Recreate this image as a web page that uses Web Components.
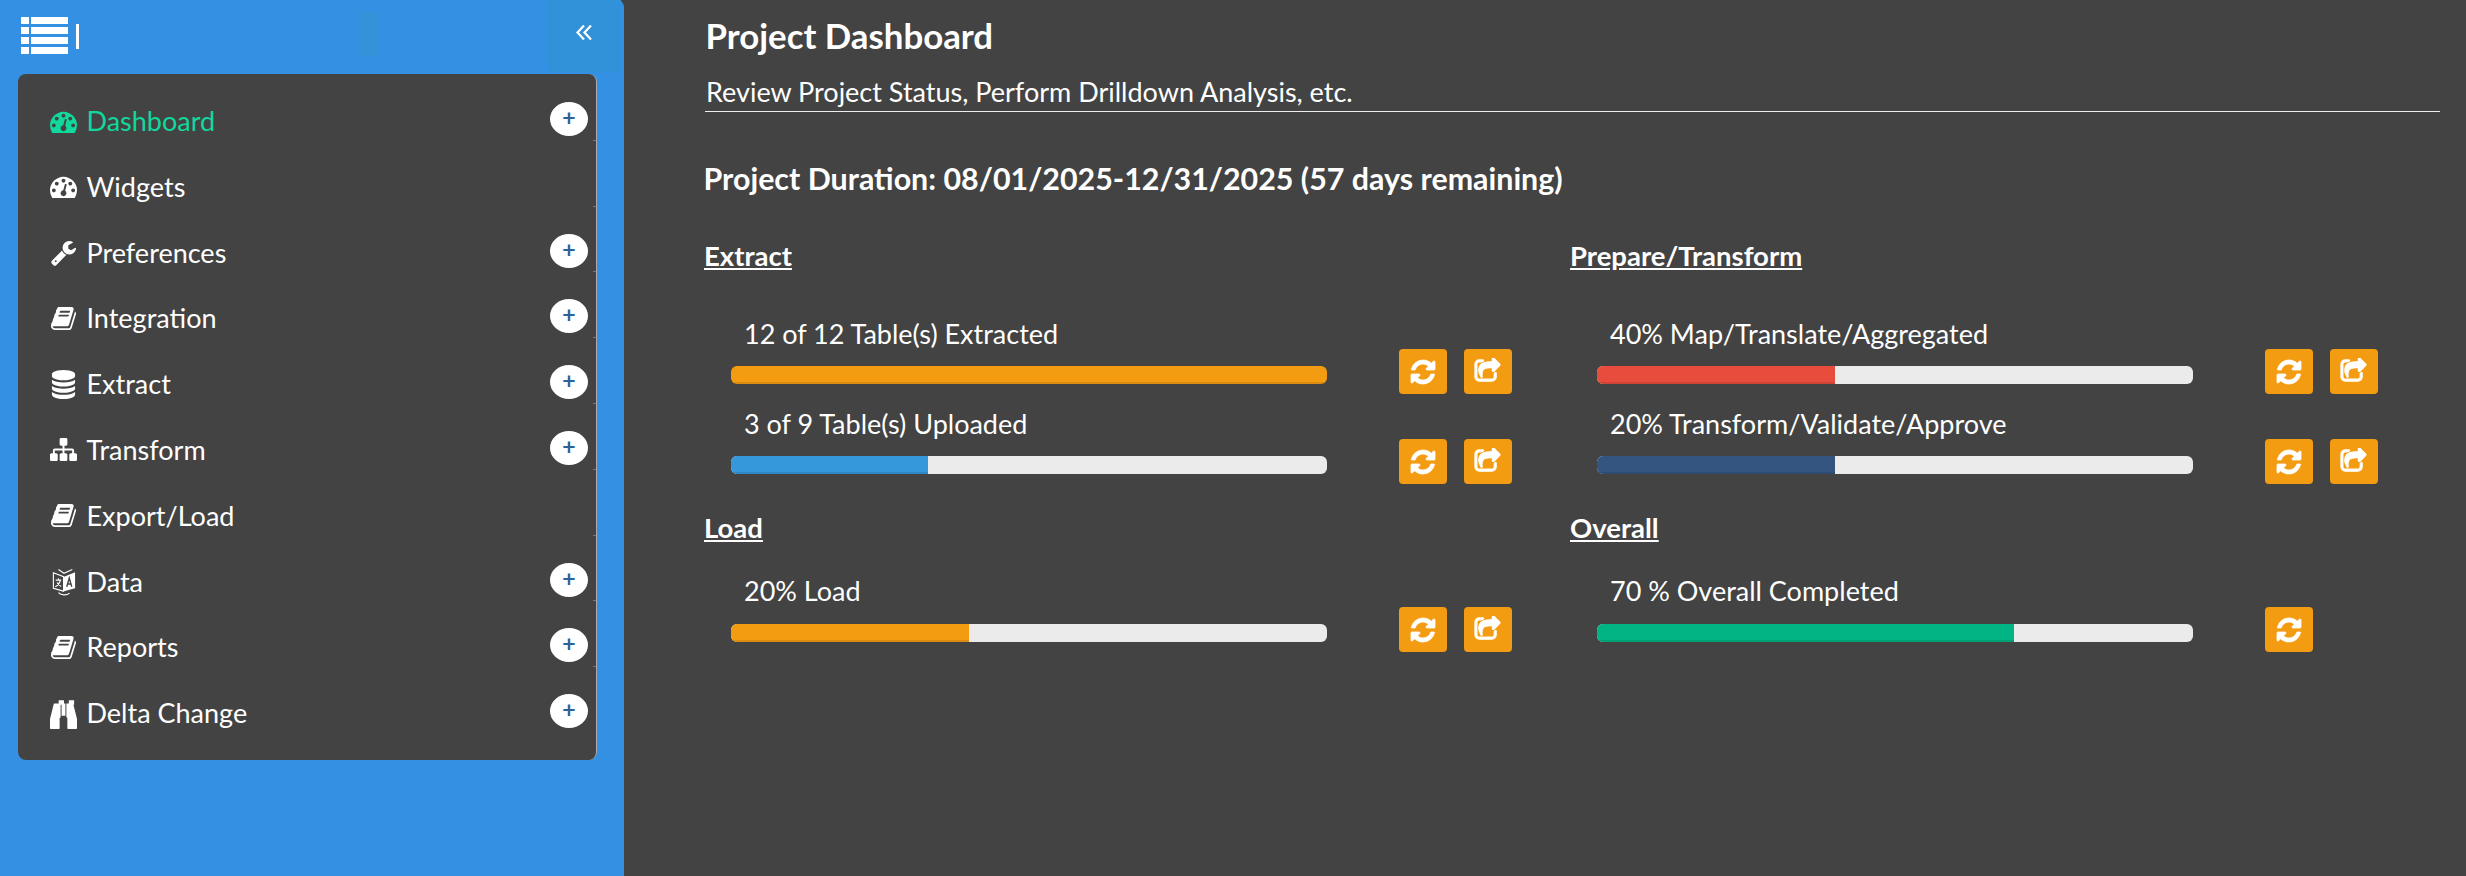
<!DOCTYPE html>
<html>
<head>
<meta charset="utf-8">
<title>Project Dashboard</title>
<style>
  html, body { margin: 0; height: 100%; }
  body { background: #434343; color: #fff; font-family: Lato, "Liberation Sans", sans-serif; overflow: hidden; }
</style>
</head>
<body>
<app-shell>
  <app-sidebar slot="sidebar">
    <nav-item icon="tachometer" expandable active>Dashboard</nav-item>
    <nav-item icon="tachometer">Widgets</nav-item>
    <nav-item icon="wrench" expandable>Preferences</nav-item>
    <nav-item icon="book" expandable>Integration</nav-item>
    <nav-item icon="database" expandable>Extract</nav-item>
    <nav-item icon="sitemap" expandable>Transform</nav-item>
    <nav-item icon="book">Export/Load</nav-item>
    <nav-item icon="language" expandable>Data</nav-item>
    <nav-item icon="book" expandable>Reports</nav-item>
    <nav-item icon="binoculars" expandable>Delta Change</nav-item>
  </app-sidebar>

  <page-header heading="Project Dashboard" subheading="Review Project Status, Perform Drilldown Analysis, etc."></page-header>
  <project-duration>Project Duration: 08/01/2025-12/31/2025 (57 days remaining)</project-duration>

  <dash-grid>
    <dash-section heading="Extract">
      <progress-row label="12 of 12 Table(s) Extracted" value="100" color="#f39c12"></progress-row>
      <progress-row label="3 of 9 Table(s) Uploaded" value="33" color="#3498db"></progress-row>
    </dash-section>
    <dash-section heading="Prepare/Transform">
      <progress-row label="40% Map/Translate/Aggregated" value="40" color="#e74c3c"></progress-row>
      <progress-row label="20% Transform/Validate/Approve" value="40" color="#34557f"></progress-row>
    </dash-section>
    <dash-section heading="Load" compact>
      <progress-row label="20% Load" value="40" color="#f39c12"></progress-row>
    </dash-section>
    <dash-section heading="Overall" compact>
      <progress-row label="70 % Overall Completed" value="70" color="#00b583" no-share></progress-row>
    </dash-section>
  </dash-grid>
</app-shell>

<script>
/********************************* AppIcon ******************************************/
const ICON_PATHS = {
  tachometer: 'M384 1152q0-53-37.5-90.5t-90.5-37.5-90.5 37.5-37.5 90.5 37.5 90.5 90.5 37.5 90.5-37.5 37.5-90.5zm192-448q0-53-37.5-90.5t-90.5-37.5-90.5 37.5-37.5 90.5 37.5 90.5 90.5 37.5 90.5-37.5 37.5-90.5zm428 481l101-382q6-26-7.5-48.5t-38.5-29.5-48 6.5-30 39.5l-101 382q-60 5-107 43.5t-63 98.5q-20 77 20 146t117 89 146-20 89-117q16-60-6-117t-72-91zm660-33q0-53-37.5-90.5t-90.5-37.5-90.5 37.5-37.5 90.5 37.5 90.5 90.5 37.5 90.5-37.5 37.5-90.5zm-640-640q0-53-37.5-90.5t-90.5-37.5-90.5 37.5-37.5 90.5 37.5 90.5 90.5 37.5 90.5-37.5 37.5-90.5zm448 192q0-53-37.5-90.5t-90.5-37.5-90.5 37.5-37.5 90.5 37.5 90.5 90.5 37.5 90.5-37.5 37.5-90.5zm320 448q0 261-141 483-19 29-54 29h-1402q-35 0-54-29-141-221-141-483 0-182 71-348t191-286 286-191 348-71 348 71 286 191 191 286 71 348z',
  wrench: 'M448 1472q0-26-19-45t-45-19-45 19-19 45 19 45 45 19 45-19 19-45zm644-420l-682 682q-37 37-90 37-52 0-91-37l-106-108q-38-36-38-90 0-53 38-91l681-681q39 98 114.5 173.5t173.5 114.5zm634-435q0 39-23 106-47 134-164.5 217.5t-258.5 83.5q-185 0-316.5-131.5t-131.5-316.5 131.5-316.5 316.5-131.5q58 0 121.5 16.5t107.5 46.5q16 11 16 28t-16 28l-293 169v224l193 107q5-3 79-48.5t135.5-81 70.5-35.5q15 0 23.5 10t8.5 25z',
  book: 'M1703 478q40 57 18 129l-275 906q-19 64-76.5 107.5t-122.5 43.5h-923q-77 0-148.5-53.5t-99.5-131.5q-24-67-2-127 0-4 3-27t4-37q1-8-3-21.5t-3-19.5q2-11 8-21t16.5-23.5 16.5-23.5q23-38 45-91.5t30-91.5q3-10 .5-30t-.5-28q3-11 17-28t17-23q21-36 42-92t25-90q1-9-2.5-32t.5-28q4-13 22-30.5t22-22.5q19-26 42.5-84.5t27.5-96.5q1-8-3-25.5t-2-26.5q2-8 9-18t18-23 17-21q8-12 16.5-30.5t15-35 16-36 19.5-32 26.5-23.5 36-11.5 47.5 5.5l-1 3q38-9 51-9h761q74 0 114 56t18 130l-274 906q-36 119-71.5 153.5t-128.5 34.5h-869q-27 0-38 15-11 16-1 43 24 70 144 70h923q29 0 56-15.5t35-41.5l300-987q7-22 5-57 38 15 59 43zm-1064 2q-4 13 2 22.5t20 9.5h608q13 0 25.5-9.5t16.5-22.5l21-64q4-13-2-22.5t-20-9.5h-608q-13 0-25.5 9.5t-16.5 22.5zm-83 256q-4 13 2 22.5t20 9.5h608q13 0 25.5-9.5t16.5-22.5l21-64q4-13-2-22.5t-20-9.5h-608q-13 0-25.5 9.5t-16.5 22.5z',
  database: 'M896 768q237 0 443-43t325-127v170q0 69-103 128t-280 93.5-385 34.5-385-34.5-280-93.5-103-128v-170q119 84 325 127t443 43zm0 768q237 0 443-43t325-127v170q0 69-103 128t-280 93.5-385 34.5-385-34.5-280-93.5-103-128v-170q119 84 325 127t443 43zm0-384q237 0 443-43t325-127v170q0 69-103 128t-280 93.5-385 34.5-385-34.5-280-93.5-103-128v-170q119 84 325 127t443 43zm0-1152q208 0 385 34.5t280 93.5 103 128v128q0 69-103 128t-280 93.5-385 34.5-385-34.5-280-93.5-103-128v-128q0-69 103-128t280-93.5 385-34.5z',
  sitemap: 'M1792 1248v320q0 40-28 68t-68 28h-320q-40 0-68-28t-28-68v-320q0-40 28-68t68-28h96v-192h-512v192h96q40 0 68 28t28 68v320q0 40-28 68t-68 28h-320q-40 0-68-28t-28-68v-320q0-40 28-68t68-28h96v-192h-512v192h96q40 0 68 28t28 68v320q0 40-28 68t-68 28h-320q-40 0-68-28t-28-68v-320q0-40 28-68t68-28h96v-192q0-52 38-90t90-38h512v-192h-96q-40 0-68-28t-28-68v-320q0-40 28-68t68-28h320q40 0 68 28t28 68v320q0 40-28 68t-68 28h-96v192h512q52 0 90 38t38 90v192h96q40 0 68 28t28 68z',
  binoculars: 'M704 320v768q0 26-19 45t-45 19v576q0 26-19 45t-45 19h-512q-26 0-45-19t-19-45v-512l249-873q7-23 31-23h424zm320 0v704h-256v-704h256zm768 896v512q0 26-19 45t-45 19h-512q-26 0-45-19t-19-45v-576q-26 0-45-19t-19-45v-768h424q24 0 31 23zm-864-1056v224h-352v-224q0-14 9-23t23-9h288q14 0 23 9t9 23zm672 0v224h-352v-224q0-14 9-23t23-9h288q14 0 23 9t9 23z',
  refresh: 'M1639 1056q0 5-1 7-64 268-268 434.5t-478 166.5q-146 0-282.5-55t-243.5-157l-129 129q-19 19-45 19t-45-19-19-45v-448q0-26 19-45t45-19h448q26 0 45 19t19 45-19 45l-137 137q71 66 161 102t187 36q134 0 250-65t186-179q11-17 53-117 8-23 30-23h192q13 0 22.5 9.5t9.5 22.5zm25-800v448q0 26-19 45t-45 19h-448q-26 0-45-19t-19-45 19-45l138-138q-148-137-349-137-134 0-250 65t-186 179q-11 17-53 117-8 23-30 23h-199q-13 0-22.5-9.5t-9.5-22.5v-7q65-268 270-434.5t480-166.5q146 0 284 55.5t245 156.5l130-129q19-19 45-19t45 19 19 45z',
  share: 'M1472 989v259q0 119-84.5 203.5t-203.5 84.5h-832q-119 0-203.5-84.5t-84.5-203.5v-832q0-119 84.5-203.5t203.5-84.5h255q13 0 22.5 9.5t9.5 22.5q0 27-26 32-77 26-133 60-10 4-16 4h-112q-66 0-113 47t-47 113v832q0 66 47 113t113 47h832q66 0 113-47t47-113v-214q0-19 18-29 28-13 54-37 16-16 35-8 21 9 21 29zm237-496l-384 384q-18 19-45 19-12 0-25-5-39-17-39-59v-192h-160q-323 0-438 131-119 137-74 473 3 23-20 34-8 2-12 2-16 0-26-13-10-14-21-31t-39.5-68.5-49.5-99.5-38.5-114-17.5-122q0-49 3.5-91t14-90 28-88 47-81.5 68.5-74 94.5-61.5 124.5-48.5 159.5-30.5 196.5-11h160v-192q0-42 39-59 13-5 25-5 26 0 45 19l384 384q19 19 19 45t-19 45z'
};

// the translate glyph in the reference is not a font icon, so it gets its own drawing
const LANGUAGE_ICON = `
  <svg viewBox="0 0 26 29" preserveAspectRatio="none">
    <path d="M1.500 5 12.500 9V24L1.500 21Z" fill="none" stroke="currentColor" stroke-width="1.200"/>
    <path d="M13 9 25 4.500V21L13 24Z" fill="currentColor"/>
    <path d="M7 1.500 13 5.500 22 1.500" fill="none" stroke="currentColor" stroke-width="1.200"/>
    <path d="M4 12.500H10M7 10.500V12.500M9 13C8 16 6 18.500 3.500 19.500M5.500 15C6.500 17 8 18.500 10 19" fill="none" stroke="currentColor" stroke-width="1.200"/>
    <path d="M16 19.500 18.700 10.500 21.400 19.500M17 16.500H20.400" fill="none" stroke="#434343" stroke-width="1.500"/>
    <path d="M7 25.500C10 28.500 16 28.500 19 26" fill="none" stroke="currentColor" stroke-width="1.200"/>
  </svg>`;

class AppIcon extends HTMLElement {
  connectedCallback() {
    if (this.shadowRoot) return;
    this.attachShadow({ mode: 'open' });
    const name = this.getAttribute('name');
    const width = this.getAttribute('width') || 28;
    const height = this.getAttribute('height') || width;
    // the share and refresh glyphs look heavier in the reference
    const weight = this.getAttribute('weight') || 0;
    const svg = name === 'language'
      ? LANGUAGE_ICON
      : `<svg viewBox="0 0 1792 1792" preserveAspectRatio="none"><path fill="currentColor" stroke="currentColor" stroke-width="${weight}" d="${ICON_PATHS[name]}"/></svg>`;
    this.shadowRoot.innerHTML = `
      <style>
        :host { display: block; width: ${width}px; height: ${height}px; }
        svg { display: block; width: 100%; height: 100%; }
      </style>${svg}`;
  }
}
customElements.define('app-icon', AppIcon);

/********************************* AppShell ******************************************/
let shellTmpl = document.createElement('template');
shellTmpl.innerHTML = `
  <style>
    :host { display: flex; height: 876px; }
    main { flex: 1; padding-left: 81px; padding-right: 26px; min-width: 0; }
  </style>
  <slot name="sidebar"></slot>
  <main><slot></slot></main>`;
class AppShell extends HTMLElement {
  constructor() {
    super();
    this.attachShadow({ mode: 'open' });
    this.shadowRoot.appendChild(shellTmpl.content.cloneNode(true));
  }
}
customElements.define('app-shell', AppShell);

/********************************* AppSidebar ******************************************/
let sidebarTmpl = document.createElement('template');
sidebarTmpl.innerHTML = `
  <style>
    :host { display: block; flex: none; width: 624px; height: 876px; background: #3490e3; border-top-right-radius: 7px; }
    header { display: flex; height: 74px; }
    .menu-icon { display: block; width: 47px; height: 37px; margin: 17px 0 0 21px; }
    .caret { width: 3px; height: 25px; margin: 24px 0 0 8px; background: #fff; }
    .tile { width: 20px; height: 44px; margin: 12px 0 0 281px; background: #3392d8; }
    .collapse { display: flex; align-items: center; justify-content: center; width: 74px; height: 72px; margin-left: 167px;
      background: #3191d9; border-radius: 0 0 8px 8px; }
    .collapse svg { display: block; width: 16px; height: 15px; margin-top: -7px; }
    nav { box-sizing: border-box; width: 579px; height: 686px; margin-left: 18px; padding-top: 1px; background: #434343;
      border-right: 1px solid #aaa; border-radius: 8px; }
  </style>
  <header>
    <svg class="menu-icon" viewBox="0 0 47 37" fill="#fff">
      <rect x="0" y="0" width="8" height="7"/><rect x="10" y="0" width="37" height="7"/>
      <rect x="0" y="10" width="8" height="7"/><rect x="10" y="10" width="37" height="7"/>
      <rect x="0" y="20" width="8" height="7"/><rect x="10" y="20" width="37" height="7"/>
      <rect x="0" y="30" width="8" height="7"/><rect x="10" y="30" width="37" height="7"/>
    </svg>
    <div class="caret"></div>
    <div class="tile"></div>
    <div class="collapse">
      <svg viewBox="0 0 16 15" fill="none" stroke="#fff" stroke-width="2.200">
        <polyline points="8,0.500 1.500,7.500 8,14.500"/>
        <polyline points="15,0.500 8.500,7.500 15,14.500"/>
      </svg>
    </div>
  </header>
  <nav><slot></slot></nav>`;
class AppSidebar extends HTMLElement {
  constructor() {
    super();
    this.attachShadow({ mode: 'open' });
    this.shadowRoot.appendChild(sidebarTmpl.content.cloneNode(true));
  }
}
customElements.define('app-sidebar', AppSidebar);

/********************************* NavItem ******************************************/
const NAV_ICON_SIZES = {
  database: [29, 29],
  language: [24, 28],
  binoculars: [27, 31]
};

let navItemTmpl = document.createElement('template');
navItemTmpl.innerHTML = `
  <style>
    :host { display: flex; position: relative; box-sizing: border-box; height: 65.8px; padding: 27px 8px 0 32px;
      color: #fff; font-size: 27px; line-height: 38px; }
    :host([active]) { color: #11d89c; }
    :host(:not(:last-child))::after { content: ""; position: absolute; right: 0; bottom: 0; width: 3px; height: 1px; background: #777; }
    .icon { display: flex; align-items: center; justify-content: center; flex: none; width: 27px; height: 38px; margin-right: 9.5px; }
    .label { flex: 1; }
    .plus { display: none; flex: none; width: 38px; height: 34px; border-radius: 19px / 17px; background: #fff; color: #2f6197;
      font-size: 23px; font-weight: 700; line-height: 31px; text-align: center; }
    :host([expandable]) .plus { display: block; }
  </style>
  <span class="icon"></span>
  <span class="label"><slot></slot></span>
  <span class="plus">+</span>`;
class NavItem extends HTMLElement {
  constructor() {
    super();
    this.attachShadow({ mode: 'open' });
    this.shadowRoot.appendChild(navItemTmpl.content.cloneNode(true));
  }

  connectedCallback() {
    const name = this.getAttribute('icon');
    const size = NAV_ICON_SIZES[name] || [27, 27];
    const icon = document.createElement('app-icon');
    icon.setAttribute('name', name);
    icon.setAttribute('width', size[0]);
    icon.setAttribute('height', size[1]);
    this.shadowRoot.querySelector('.icon').appendChild(icon);
  }
}
customElements.define('nav-item', NavItem);

/********************************* PageHeader ******************************************/
let headerTmpl = document.createElement('template');
headerTmpl.innerHTML = `
  <style>
    :host { display: block; height: 112px; padding-left: 0.5px; }
    h1 { margin: 0; padding-top: 15px; font-size: 34.800px; font-weight: 700; line-height: 41px; }
    p { box-sizing: border-box; margin: 17px 0 0 -0.5px; height: 39px; padding-left: 1px; font-size: 27px; line-height: 38px; border-bottom: 1.500px solid #eee; }
  </style>
  <h1></h1>
  <p></p>`;
class PageHeader extends HTMLElement {
  constructor() {
    super();
    this.attachShadow({ mode: 'open' });
    this.shadowRoot.appendChild(headerTmpl.content.cloneNode(true));
  }

  connectedCallback() {
    this.shadowRoot.querySelector('h1').textContent = this.getAttribute('heading');
    this.shadowRoot.querySelector('p').textContent = this.getAttribute('subheading');
  }
}
customElements.define('page-header', PageHeader);

/********************************* ProjectDuration ******************************************/
let durationTmpl = document.createElement('template');
durationTmpl.innerHTML = `
  <style>
    :host { display: block; height: 40px; margin: 46px 0 0 -1.500px; font-size: 30.4px; font-weight: 700; line-height: 40px; }
  </style>
  <slot></slot>`;
class ProjectDuration extends HTMLElement {
  constructor() {
    super();
    this.attachShadow({ mode: 'open' });
    this.shadowRoot.appendChild(durationTmpl.content.cloneNode(true));
  }
}
customElements.define('project-duration', ProjectDuration);

/********************************* DashGrid ******************************************/
let gridTmpl = document.createElement('template');
gridTmpl.innerHTML = `
  <style>
    :host { display: grid; grid-template-columns: 866px 866px; margin-top: 43px; row-gap: 13px; }
  </style>
  <slot></slot>`;
class DashGrid extends HTMLElement {
  constructor() {
    super();
    this.attachShadow({ mode: 'open' });
    this.shadowRoot.appendChild(gridTmpl.content.cloneNode(true));
  }
}
customElements.define('dash-grid', DashGrid);

/********************************* DashSection ******************************************/
let sectionTmpl = document.createElement('template');
sectionTmpl.innerHTML = `
  <style>
    :host { display: block; }
    :host([compact]) { --label-top: -2px; --track-gap: 18px; }
    h2 { margin: 0 0 49px -1px; font-size: 27.500px; font-weight: 700; line-height: 30px; text-decoration: underline; }
    :host([compact]) h2 { margin-bottom: 35px; }
  </style>
  <h2></h2>
  <slot></slot>`;
class DashSection extends HTMLElement {
  constructor() {
    super();
    this.attachShadow({ mode: 'open' });
    this.shadowRoot.appendChild(sectionTmpl.content.cloneNode(true));
  }

  connectedCallback() {
    this.shadowRoot.querySelector('h2').textContent = this.getAttribute('heading');
  }
}
customElements.define('dash-section', DashSection);

/********************************* ProgressRow ******************************************/
let rowTmpl = document.createElement('template');
rowTmpl.innerHTML = `
  <style>
    :host { display: flex; height: 90px; padding-left: 26px; }
    .info { flex: none; width: 596px; }
    .label { margin-top: var(--label-top, -1px); padding-left: 13px; font-size: 27px; line-height: 30px; }
    .track { height: 18px; margin-top: var(--track-gap, 17px); background: #ebebeb; border-radius: 6px; overflow: hidden; }
    .fill { height: 100%; box-shadow: inset 0 -2px 0 rgba(0, 0, 0, 0.1); }
    .actions { display: flex; gap: 17.5px; margin: 29px 0 0 72px; }
  </style>
  <div class="info">
    <div class="label"></div>
    <div class="track"><div class="fill"></div></div>
  </div>
  <div class="actions">
    <icon-button icon="refresh"></icon-button>
    <icon-button icon="share"></icon-button>
  </div>`;
class ProgressRow extends HTMLElement {
  constructor() {
    super();
    this.attachShadow({ mode: 'open' });
    this.shadowRoot.appendChild(rowTmpl.content.cloneNode(true));
  }

  connectedCallback() {
    this.shadowRoot.querySelector('.label').textContent = this.getAttribute('label');
    const fill = this.shadowRoot.querySelector('.fill');
    fill.style.width = this.getAttribute('value') + '%';
    fill.style.background = this.getAttribute('color');
    if (this.hasAttribute('no-share')) this.shadowRoot.querySelector('[icon="share"]').remove();
  }
}

/********************************* IconButton ******************************************/
let buttonTmpl = document.createElement('template');
buttonTmpl.innerHTML = `
  <style>
    :host { display: flex; align-items: center; justify-content: center; width: 47.5px; height: 45px; background: #f39c12; border-radius: 4px; color: #fff; }
  </style>`;
class IconButton extends HTMLElement {
  constructor() {
    super();
    this.attachShadow({ mode: 'open' });
    this.shadowRoot.appendChild(buttonTmpl.content.cloneNode(true));
  }

  connectedCallback() {
    const name = this.getAttribute('icon');
    const icon = document.createElement('app-icon');
    icon.setAttribute('name', name);
    icon.setAttribute('width', name === 'share' ? 27 : 28);
    icon.setAttribute('weight', name === 'share' ? 80 : 50);
    this.shadowRoot.appendChild(icon);
  }
}
customElements.define('icon-button', IconButton);
customElements.define('progress-row', ProgressRow);
</script>
</body>
</html>
